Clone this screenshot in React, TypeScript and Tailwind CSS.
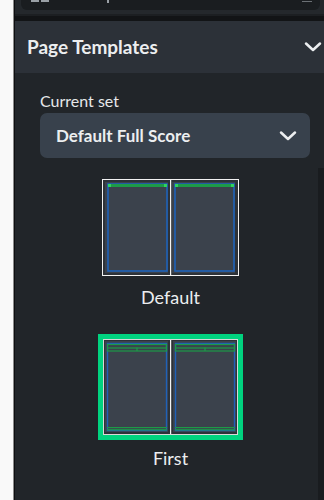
const font = { fontFamily: '"Source Sans Pro", Lato, "Noto Sans", "Liberation Sans", sans-serif' };

const Chevron = () => (
  <svg width="18" height="12" viewBox="0 0 18 12" className="shrink-0">
    <path d="M2 2.5 L9 9 L16 2.5" fill="none" stroke="#eceef0" strokeWidth="2.5" strokeLinecap="round" strokeLinejoin="round" />
  </svg>
);

// page preview for the "Default" template
const DefaultThumb = () => (
  <svg width="137" height="97" viewBox="0 0 137 97">
    <rect x="0.5" y="0.5" width="136" height="96" fill="#2d3238" stroke="#f2f2f2" />
    <rect x="68" y="1" width="1.2" height="95" fill="#f2f2f2" />
    {[0, 67].map((dx) => (
      <g key={dx} transform={`translate(${dx} 0)`}>
        <rect x="3" y="3" width="63" height="91" fill="#3b424c" />
        <rect x="6" y="5" width="59" height="87" fill="none" stroke="#1f62b8" strokeWidth="1.6" />
        <rect x="6" y="5" width="59" height="3" fill="#1d9a48" />
        <rect x="6" y="5" width="3" height="3" fill="#2fd35c" />
        <rect x="62" y="5" width="3" height="3" fill="#2fd35c" />
      </g>
    ))}
  </svg>
);

// page preview for the "First" template
const FirstThumb = () => (
  <svg width="135" height="96" viewBox="0 0 135 96">
    <rect x="0.5" y="0.5" width="134" height="95" fill="#2d3238" stroke="#d8d8d8" />
    <rect x="67" y="1" width="1.2" height="94" fill="#f2f2f2" />
    {[0, 68].map((dx) => (
      <g key={dx} transform={`translate(${dx} 0)`}>
        <rect x="2" y="2" width="63" height="91" fill="#3b424c" />
        <rect x="4.5" y="4.5" width="59" height="87" fill="none" stroke="#1f62b8" strokeWidth="1.4" />
        <rect x="4.5" y="5.5" width="59" height="6.5" fill="none" stroke="#1d9a48" strokeWidth="1.2" />
        <rect x="4" y="8.4" width="60" height="1.2" fill="#1d9a48" />
        <rect x="33.4" y="8.5" width="1.2" height="3.5" fill="#1d9a48" />
        <rect x="4" y="88" width="60" height="1.2" fill="#1d9a48" />
        <rect x="4" y="90.2" width="60" height="1.2" fill="#1d9a48" />
      </g>
    ))}
  </svg>
);

export default function App() {
  return (
    <div className="flex h-[500px] w-[324px] overflow-hidden bg-[#f9f9f9]" style={font}>
      <div className="ml-[13px] w-[2px] shrink-0 border-l border-[#8a8a8a] bg-[#0d0e10]" />
      <div className="flex min-w-0 flex-1 flex-col bg-[#212529]">
        {/* cut-off search field */}
        <div className="h-[14px] shrink-0 bg-[#24282c] pl-[6px] pr-[4px]">
          <div className="relative h-[10px] rounded-b-[6px] bg-[#1a1d20]">
            <div className="absolute left-[10px] top-0 h-[2px] w-[8px] bg-[#9aa0a6]" />
            <div className="absolute left-[20px] top-0 h-[2px] w-[8px] bg-[#9aa0a6]" />
            <div className="absolute left-[86px] top-0 h-[3px] w-[1.5px] bg-[#9aa0a6]" />
            <div className="absolute left-[281px] top-0 h-[2px] w-[10px] border-b border-[#6b7075]" />
          </div>
        </div>
        <div className="h-[2px] shrink-0 bg-[#1c1f22]" />
        <div className="h-[5px] shrink-0 bg-[#121416]" />

        {/* section header */}
        <div className="flex h-[52px] shrink-0 items-center justify-between bg-[#2c3138] pl-[12px] pr-[2px]">
          <span className="text-[19px] font-bold text-[#eceef0]">Page Templates</span>
          <Chevron />
        </div>

        <div className="flex min-h-0 flex-1">
          <div className="flex flex-1 flex-col">
            <div className="pl-[25px] pt-[18px] text-[16px] leading-[20px] text-[#e6e8ea]">Current set</div>
            <div className="ml-[25px] mt-[2px] flex h-[45px] w-[270px] items-center justify-between rounded-[7px] bg-[#38414c] pl-[16px] pr-[13px]">
              <span className="text-[17px] font-bold text-[#eceef0]">Default Full Score</span>
              <Chevron />
            </div>

            <div className="mt-[21px] flex flex-col items-center pl-[8px]">
              <DefaultThumb />
              <div className="mt-[9px] text-[18px] leading-[24px] text-[#eceef0]">Default</div>
            </div>

            <div className="mt-[25px] flex flex-col items-center pl-[8px]">
              <div className="border-[5px] border-[#00d37f]">
                <FirstThumb />
              </div>
              <div className="mt-[6px] text-[18px] leading-[24px] text-[#eceef0]">First</div>
            </div>
          </div>
          {/* scrollbar track */}
          <div className="flex w-[6px] shrink-0 flex-col">
            <div className="h-[95px]" />
            <div className="flex-1 bg-[#191c1f]" />
          </div>
        </div>
      </div>
    </div>
  );
}
